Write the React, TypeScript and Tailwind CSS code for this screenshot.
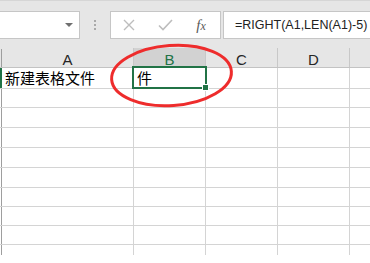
import React from 'react';

const cols = ['A', 'B', 'C', 'D', ''];
const colW = ['w-[132px]', 'w-[72px]', 'w-[72px]', 'w-[72px]', 'flex-1'];
const rowH = ['h-[19px]', 'h-[20px]', 'h-[20px]', 'h-[20px]', 'h-[20px]', 'h-[19px]', 'h-[19px]', 'h-[19px]', 'h-[10px]'];

const cjk = "font-['Noto_Sans_CJK_SC','Noto_Sans',sans-serif]";

const App: React.FC = () => {
    return (
        <div className="relative w-[370px] h-[263px] overflow-hidden bg-white font-['Liberation_Sans',Arial,sans-serif]">
            {/* Toolbar: name box + formula bar */}
            <div className="h-[48px] bg-[#e6e6e6] border-t border-[#d6d6d6] flex items-start pt-[10px]">
                <div className="-ml-px w-[81px] h-[28px] bg-white border border-[#c6c6c6] flex items-center justify-end pr-[6px]">
                    <svg width="8" height="4" viewBox="0 0 8 4">
                        <path d="M0 0 H8 L4 4 Z" fill="#6f6f6f" />
                    </svg>
                </div>
                <div className="w-[30px] h-[28px] flex flex-col items-center justify-center gap-[2px]">
                    <span className="w-[2px] h-[2px] bg-[#a9a9a9]" />
                    <span className="w-[2px] h-[2px] bg-[#a9a9a9]" />
                    <span className="w-[2px] h-[2px] bg-[#a9a9a9]" />
                </div>
                <div className="w-[111px] h-[28px] bg-white border border-[#c6c6c6] flex items-center">
                    <div className="w-[36px] flex justify-center">
                        <svg width="12" height="12" viewBox="0 0 12 12">
                            <path d="M1 1 L11 11 M11 1 L1 11" stroke="#bdbdbd" strokeWidth="1.4" fill="none" />
                        </svg>
                    </div>
                    <div className="w-[36px] flex justify-center">
                        <svg width="15" height="12" viewBox="0 0 15 12">
                            <path d="M1 6.5 L5 10.5 L14 1" stroke="#bdbdbd" strokeWidth="1.6" fill="none" />
                        </svg>
                    </div>
                    <div className="w-[36px] flex justify-center">
                        <span className="font-['Liberation_Serif',serif] italic text-[15px] text-[#5a5a5a] leading-none">
                            f<span className="text-[12px]">x</span>
                        </span>
                    </div>
                </div>
                <div className="ml-[2px] -mr-[2px] flex-1 h-[28px] bg-white border border-[#c6c6c6] flex items-center pl-[11px] text-[12.5px] text-[#222] whitespace-nowrap">
                    =RIGHT(A1,LEN(A1)-5)
                </div>
            </div>

            {/* Column headers */}
            <div className="flex h-[20px] bg-[#e6e6e6] border-b border-[#c3c3c3]">
                <div className="w-[2px] mt-px border-r border-[#9e9e9e]" />
                {cols.map((c, i) => (
                    <div
                        key={i}
                        className={`${colW[i]} ${i < 4 ? 'border-r border-[#c8c8c8]' : ''} ${c === 'B' ? 'bg-[#d2d2d2] text-[#217346]' : 'text-[#262626]'} flex items-end justify-center text-[15px] leading-none`}
                    >
                        {c}
                    </div>
                ))}
            </div>

            {/* Row 1 */}
            <div className="flex h-[21px] border-b border-[#d4d4d4]">
                <div className="w-[2px] bg-[#217346]" />
                <div className={`${colW[0]} border-r border-[#d4d4d4] pl-[3px] ${cjk} text-[15px] leading-[20px] text-black whitespace-nowrap`}>新建表格文件</div>
                <div className={`${colW[1]} border-r border-[#d4d4d4] pl-[3px] ${cjk} text-[15px] leading-[20px] text-black`}>件</div>
                <div className={`${colW[2]} border-r border-[#d4d4d4]`} />
                <div className={`${colW[3]} border-r border-[#d4d4d4]`} />
                <div className="flex-1" />
            </div>

            {/* Remaining rows */}
            {rowH.map((h, r) => (
                <div key={r} className={`flex ${h} ${r < rowH.length - 1 ? 'border-b border-[#d4d4d4]' : ''}`}>
                    <div className="w-[2px] border-r border-[#9e9e9e]" />
                    <div className={`${colW[0]} border-r border-[#d4d4d4]`} />
                    <div className={`${colW[1]} border-r border-[#d4d4d4]`} />
                    <div className={`${colW[2]} border-r border-[#d4d4d4]`} />
                    <div className={`${colW[3]} border-r border-[#d4d4d4]`} />
                    <div className="flex-1" />
                </div>
            ))}

            {/* Active cell outline */}
            <div className="absolute left-[132px] top-[66px] w-[75px] h-[23px] border-2 border-[#217346]" />
            <div className="absolute left-[202px] top-[84px] w-[7px] h-[7px] bg-[#217346] border border-white" />

            {/* Red annotation ring */}
            <svg className="absolute left-0 top-0 pointer-events-none" width="370" height="263" viewBox="0 0 370 263">
                <ellipse cx="171.5" cy="75.5" rx="60" ry="30" transform="rotate(-4 171.5 75.5)" stroke="#ee2c2c" strokeWidth="3" fill="none" />
            </svg>
        </div>
    );
};

export default App;
